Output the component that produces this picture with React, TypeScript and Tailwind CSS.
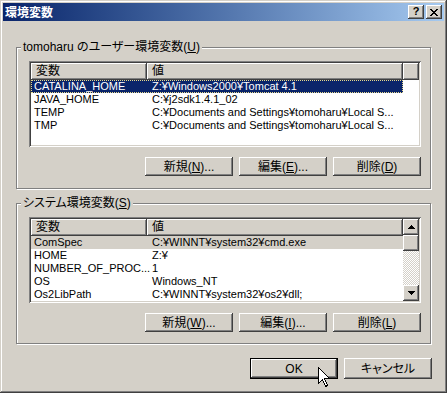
import React from "react";

type Row = [string, string];

const userVars: Row[] = [
  ["CATALINA_HOME", "Z:¥Windows2000¥Tomcat 4.1"],
  ["JAVA_HOME", "C:¥j2sdk1.4.1_02"],
  ["TEMP", "C:¥Documents and Settings¥tomoharu¥Local S..."],
  ["TMP", "C:¥Documents and Settings¥tomoharu¥Local S..."],
];

const sysVars: Row[] = [
  ["ComSpec", "C:¥WINNT¥system32¥cmd.exe"],
  ["HOME", "Z:¥"],
  ["NUMBER_OF_PROC...", "1"],
  ["OS", "Windows_NT"],
  ["Os2LibPath", "C:¥WINNT¥system32¥os2¥dll;"],
];

// classic 3D edges
const raised =
  "shadow-[inset_-1px_-1px_#404040,inset_1px_1px_#ffffff,inset_-2px_-2px_#808080,inset_2px_2px_#d4d0c8]";
const sunken =
  "shadow-[inset_1px_1px_#808080,inset_-1px_-1px_#ffffff,inset_2px_2px_#404040,inset_-2px_-2px_#d4d0c8]";
const etched =
  "border border-[#808080] shadow-[1px_1px_0_#ffffff,inset_1px_1px_0_#ffffff]";

function Btn({ children, h, def }: { children: React.ReactNode; h: string; def?: boolean }) {
  if (def) {
    return (
      <div className={`${h} w-[88px] border border-black bg-[#d4d0c8]`}>
        <div className={`${raised} flex h-full items-center justify-center text-[12px]`}>{children}</div>
      </div>
    );
  }
  return (
    <div className={`${raised} ${h} flex w-[88px] items-center justify-center bg-[#d4d0c8] text-[12px]`}>
      {children}
    </div>
  );
}

function Arrow({ down }: { down?: boolean }) {
  return (
    <svg width="7" height="4" viewBox="0 0 7 4" shapeRendering="crispEdges" className={down ? "rotate-180" : ""}>
      <path d="M3 0h1v1h1v1h1v1h1v1H0V3h1V2h1V1h1z" fill="#000" />
    </svg>
  );
}

function Header({ filler }: { filler?: boolean }) {
  return (
    <div className="flex h-[17px] text-[12px] leading-[16px]">
      <div className={`${raised} w-[116px] bg-[#d4d0c8] pl-[5px]`}>変数</div>
      <div className={`${raised} w-[256px] bg-[#d4d0c8] pl-[5px]`}>値</div>
      {filler && <div className={`${raised} flex-1 bg-[#d4d0c8]`} />}
    </div>
  );
}

function Rows({ rows, sel }: { rows: Row[]; sel: "focus" | "gray" }) {
  return (
    <div className="font-['Liberation_Sans','Noto_Sans_CJK_JP',sans-serif] text-[11px]">
      {rows.map(([name, value], i) => {
        let cls = "text-black";
        if (i === 0 && sel === "focus")
          cls = "bg-[#0a246a] text-white outline-1 outline-dotted outline-[#e6d88c] -outline-offset-1";
        if (i === 0 && sel === "gray") cls = "bg-[#d4d0c8] text-black";
        return (
          <div key={name + i} className={`flex h-[13px] w-[372px] leading-[13px] whitespace-nowrap ${cls}`}>
            <div className="w-[116px] pl-[3px]">{name}</div>
            <div className="pl-[5px]">{value}</div>
          </div>
        );
      })}
    </div>
  );
}

function Cursor() {
  return (
    <svg className="absolute left-[318px] top-[367px]" width="13" height="21" viewBox="0 0 13 21" shapeRendering="crispEdges">
      <path d="M0.5 0.5V16.5L4.5 12.5L7.5 19.5L9.5 18.5L6.5 11.5H11.5Z" fill="#fff" stroke="#000" strokeWidth="1" strokeLinejoin="miter" />
    </svg>
  );
}

export default function App() {
  return (
    <div className="relative flex h-[393px] w-[447px] flex-col bg-[#d4d0c8] p-[3px] font-['Liberation_Sans','Noto_Sans_CJK_JP',sans-serif] text-black [font-feature-settings:'palt'] shadow-[inset_-1px_-1px_#404040,inset_1px_1px_#d4d0c8,inset_-2px_-2px_#808080,inset_2px_2px_#ffffff]">
      {/* Title bar */}
      <div className="flex h-[18px] items-center bg-gradient-to-r from-[#0a246a] to-[#a6caf0] pl-[2px] pr-[2px]">
        <span className="flex-1 font-['Noto_Sans_CJK_JP',sans-serif] text-[12px] leading-[16px] font-bold text-white">環境変数</span>
        <div className={`${raised} flex h-[14px] w-[16px] items-center justify-center bg-[#d4d0c8] pb-[1px] text-[11px] leading-[11px] font-bold`}>?</div>
        <div className={`${raised} ml-[2px] flex h-[14px] w-[16px] items-center justify-center bg-[#d4d0c8]`}>
          <svg width="8" height="7" viewBox="0 0 8 7" shapeRendering="crispEdges">
            <path d="M0 0h2v1H0zM6 0h2v1H6zM1 1h2v1H1zM5 1h2v1H5zM2 2h4v1H2zM3 3h2v1H3zM2 4h4v1H2zM1 5h2v1H1zM5 5h2v1H5zM0 6h2v1H0zM6 6h2v1H6z" fill="#000" />
          </svg>
        </div>
      </div>

      {/* User variables */}
      <div className={`${etched} relative ml-[13px] mt-[26px] h-[142px] w-[415px] pl-[12px] pt-[13px]`}>
        <span className="absolute left-[4px] top-[-9px] bg-[#d4d0c8] px-[2px] text-[12px] leading-[16px] whitespace-nowrap">
          tomoharu のユーザー環境変数(<u>U</u>)
        </span>
        <div className={`${sunken} h-[86px] w-[392px] bg-white p-[2px]`}>
          <Header filler />
          <Rows rows={userVars} sel="focus" />
        </div>
        <div className="mt-[10px] flex w-[392px] justify-end gap-[6px]">
          <Btn h="h-[19px]">新規(<u>N</u>)...</Btn>
          <Btn h="h-[19px]">編集(<u>E</u>)...</Btn>
          <Btn h="h-[19px]">削除(<u>D</u>)</Btn>
        </div>
      </div>

      {/* System variables */}
      <div className={`${etched} relative ml-[13px] mt-[14px] h-[141px] w-[415px] pl-[12px] pt-[13px]`}>
        <span className="absolute left-[4px] top-[-9px] bg-[#d4d0c8] px-[2px] text-[12px] leading-[16px] whitespace-nowrap">
          システム環境変数(<u>S</u>)
        </span>
        <div className={`${sunken} flex h-[86px] w-[392px] bg-white p-[2px]`}>
          <div className="w-[372px]">
            <Header />
            <Rows rows={sysVars} sel="gray" />
          </div>
          <div className="flex w-[16px] flex-col">
            <div className={`${raised} flex h-[16px] items-center justify-center bg-[#d4d0c8]`}>
              <Arrow />
            </div>
            <div className={`${raised} h-[16px] bg-[#d4d0c8]`} />
            <div className="flex-1 bg-[repeating-conic-gradient(#d4d0c8_0%_25%,#ffffff_0%_50%)] bg-[length:2px_2px]" />
            <div className={`${raised} flex h-[16px] items-center justify-center bg-[#d4d0c8]`}>
              <Arrow down />
            </div>
          </div>
        </div>
        <div className="mt-[10px] flex w-[392px] justify-end gap-[6px]">
          <Btn h="h-[19px]">新規(<u>W</u>)...</Btn>
          <Btn h="h-[19px]">編集(<u>I</u>)...</Btn>
          <Btn h="h-[19px]">削除(<u>L</u>)</Btn>
        </div>
      </div>

      {/* OK / Cancel */}
      <div className="mt-[14px] flex justify-end gap-[6px] pr-[12px]">
        <Btn h="h-[21px]" def>
          OK
        </Btn>
        <Btn h="h-[21px]">キャンセル</Btn>
      </div>

      <Cursor />
    </div>
  );
}
